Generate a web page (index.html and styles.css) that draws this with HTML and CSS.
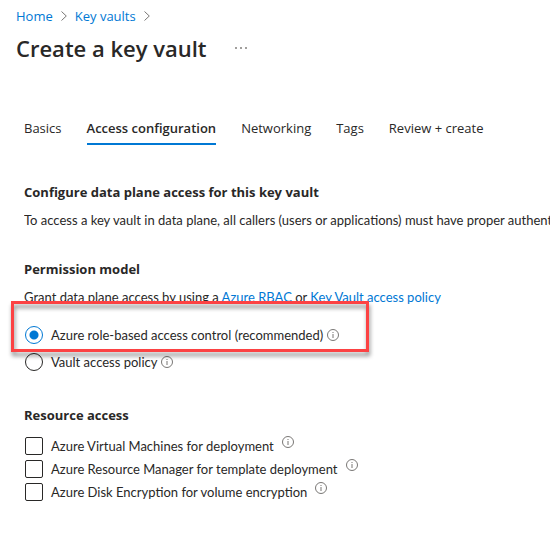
FILE: index.html
```html
<!DOCTYPE html>
<html lang="en">
<head>
<meta charset="utf-8">
<meta name="viewport" content="width=device-width, initial-scale=1">
<title>Create a key vault</title>
<link rel="stylesheet" href="styles.css">
</head>
<body>
<svg class="sprite" aria-hidden="true">
  <symbol id="chevron" viewBox="0 0 6 10"><path d="M.5.5 5.3 5 .5 9.5" fill="none" stroke="currentColor"/></symbol>
  <symbol id="info" viewBox="0 0 12 12"><circle cx="6" cy="6" r="5.5" fill="none" stroke="currentColor"/><path d="M5.5 5h1v4h-1zM5.5 3h1v1h-1z" fill="currentColor"/></symbol>
</svg>
<header class="header">
  <nav class="breadcrumb" aria-label="Breadcrumb">
    <a href="#">Home</a>
    <svg class="chevron"><use href="#chevron"/></svg>
    <a href="#">Key vaults</a>
    <svg class="chevron"><use href="#chevron"/></svg>
  </nav>
  <div class="title-row">
    <h1>Create a key vault</h1>
    <button class="more" type="button" aria-label="More actions"><svg viewBox="0 0 12 2" width="12" height="2"><path d="M0 0h2v2H0zM5 0h2v2H5zM10 0h2v2h-2z" fill="currentColor"/></svg></button>
  </div>
</header>
<main class="content">
  <nav class="tabs" aria-label="Steps">
    <a href="#">Basics</a>
    <a class="active" href="#" aria-current="page">Access configuration</a>
    <a href="#">Networking</a>
    <a href="#">Tags</a>
    <a href="#">Review + create</a>
  </nav>
  <section>
    <h2>Configure data plane access for this key vault</h2>
    <p>To access a key vault in data plane, all callers (users or applications) must have proper authentication</p>
  </section>
  <section>
    <h2>Permission model</h2>
    <p>Grant data plane access by using a <a href="#">Azure RBAC</a> or <a href="#">Key Vault access policy</a></p>
    <div class="radios">
      <div class="option highlighted">
        <input type="radio" name="model" id="rbac" checked>
        <label for="rbac">Azure role-based access control (recommended)</label>
        <svg class="info"><use href="#info"/></svg>
      </div>
      <div class="option">
        <input type="radio" name="model" id="policy">
        <label for="policy">Vault access policy</label>
        <svg class="info"><use href="#info"/></svg>
      </div>
    </div>
  </section>
  <section>
    <h2>Resource access</h2>
    <div class="checks">
      <div class="option">
        <input type="checkbox" id="vm">
        <label for="vm">Azure Virtual Machines for deployment</label>
        <svg class="info"><use href="#info"/></svg>
      </div>
      <div class="option">
        <input type="checkbox" id="arm">
        <label for="arm">Azure Resource Manager for template deployment</label>
        <svg class="info"><use href="#info"/></svg>
      </div>
      <div class="option">
        <input type="checkbox" id="disk">
        <label for="disk">Azure Disk Encryption for volume encryption</label>
        <svg class="info"><use href="#info"/></svg>
      </div>
    </div>
  </section>
</main>
</body>
</html>
```
FILE: styles.css
```css
* { box-sizing: border-box; }
body {
  margin: 0;
  background: #fff;
  color: #292827;
  font: 13px/20px "Segoe UI", "Open Sans", "Noto Sans", sans-serif;
  overflow-x: hidden;
}
a { color: #0078d4; text-decoration: none; }
h1, h2, p { margin: 0; }
.sprite { position: absolute; width: 0; height: 0; }
.header { padding: 6px 16px 0; }
.breadcrumb { display: flex; align-items: center; gap: 8px; }
.chevron { width: 6px; height: 10px; color: #797775; }
.title-row { display: flex; align-items: center; gap: 28px; margin-top: 6px; }
h1 { font-size: 22px; line-height: 32px; font-weight: 600; }
.more { display: flex; padding: 0; border: 0; background: none; color: #a19f9d; }
.content { padding: 0 0 24px 24px; }
.tabs { display: flex; gap: 25px; margin: 54px 0 37px; white-space: nowrap; }
.tabs a { color: inherit; padding-bottom: 5px; border-bottom: 2px solid transparent; }
.tabs .active { font-weight: 600; border-color: #0078d4; }
section { margin-bottom: 29px; }
h2 { font-size: 13px; line-height: 20px; font-weight: 700; }
p, label { font-family: "Segoe UI", Lato, "Open Sans", sans-serif; }
p { margin-top: 8px; white-space: nowrap; overflow: hidden; }
.option { display: flex; align-items: center; width: fit-content; white-space: nowrap; }
input {
  appearance: none;
  width: 18px;
  height: 18px;
  margin: 0 8px 0 1px;
  border: 1px solid #292827;
  border-radius: 2px;
  background: #fff;
}
input[type="radio"] { border-radius: 50%; }
input[type="radio"]:checked {
  border-color: #0078d4;
  background: radial-gradient(circle, #0078d4 4px, #fff 5px);
}
.info { width: 12px; height: 12px; margin-left: 4px; color: #797775; }
.radios { display: grid; gap: 7px; margin: 18px 0 33px; }
.highlighted { position: relative; }
.highlighted::after {
  content: "";
  position: absolute;
  inset: -24px -30px -7px -13px;
  border: 3px solid #fc4243;
  filter: drop-shadow(1px 4px 2px rgb(0 0 0 / 45%));
  pointer-events: none;
}
.checks { display: grid; gap: 3px; margin-top: 11px; }
.checks .info { margin: 0 0 8px 8px; }
```
